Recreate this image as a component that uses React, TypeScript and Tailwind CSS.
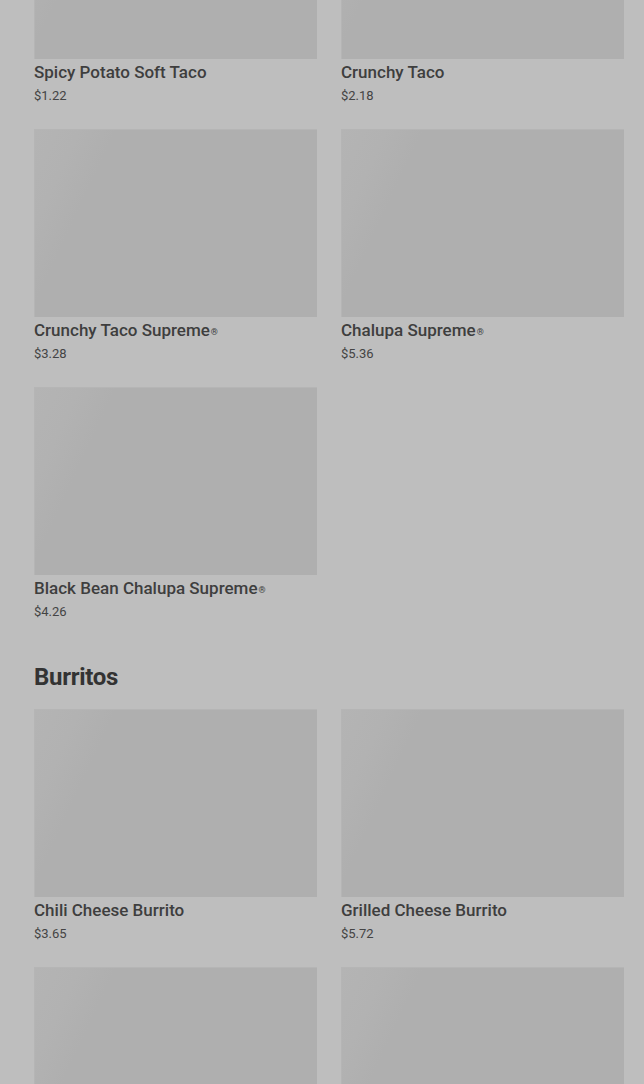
import React from "react";

type Item = { name: string; price: string; reg?: boolean };

const tacos: Item[] = [
  { name: "Spicy Potato Soft Taco", price: "$1.22" },
  { name: "Crunchy Taco", price: "$2.18" },
  { name: "Crunchy Taco Supreme", price: "$3.28", reg: true },
  { name: "Chalupa Supreme", price: "$5.36", reg: true },
  { name: "Black Bean Chalupa Supreme", price: "$4.26", reg: true },
];

const burritos: Item[] = [
  { name: "Chili Cheese Burrito", price: "$3.65" },
  { name: "Grilled Cheese Burrito", price: "$5.72" },
  { name: "", price: "" },
  { name: "", price: "" },
];

function Card({ item }: { item: Item }) {
  return (
    <div className="flex flex-col">
      <div className="h-[188px] w-full bg-[#afafaf] bg-[linear-gradient(115deg,#b4b4b4_0%,#b2b2b2_12%,#afafaf_22%,#afafaf_100%)] border-t border-l border-[#b5b5b5]" />
      {item.name && (
        <>
          <div className="mt-[3px] text-[17px] leading-[20px] font-medium text-[#3e3e3e] tracking-[0px]">
            {item.name}
            {item.reg && <sup className="text-[9px] ml-[1px] relative -top-[1px]">®</sup>}
          </div>
          <div className="mt-[5px] text-[13px] leading-[18px] text-[#444444]">{item.price}</div>
        </>
      )}
    </div>
  );
}

export default function App() {
  return (
    <div
      className="w-[644px] h-[1084px] overflow-hidden bg-[#bebebe]"
      style={{ fontFamily: "Roboto, 'Liberation Sans', sans-serif" }}
    >
      <div className="-mt-[129px] pl-[34px] pr-[20px]">
        <div className="grid grid-cols-2 gap-x-[24px] gap-y-[24px]">
          {tacos.map((t, i) => (
            <Card key={i} item={t} />
          ))}
        </div>
        <h2 className="mt-[40px] text-[24px] leading-[32px] font-bold text-[#333333] tracking-[-0.3px]">
          Burritos
        </h2>
        <div className="mt-[16px] grid grid-cols-2 gap-x-[24px] gap-y-[24px]">
          {burritos.map((t, i) => (
            <Card key={i} item={t} />
          ))}
        </div>
      </div>
    </div>
  );
}
